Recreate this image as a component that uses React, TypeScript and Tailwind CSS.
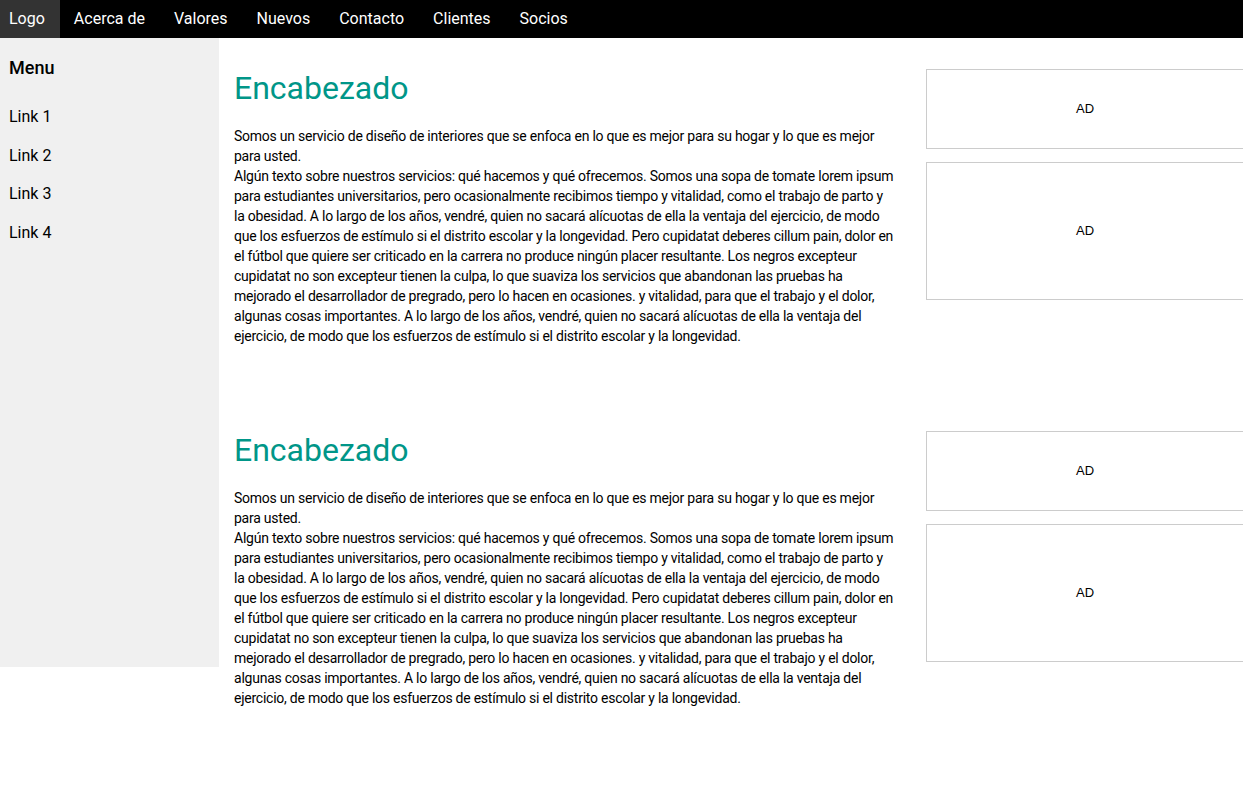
const navItems = ["Acerca de", "Valores", "Nuevos", "Contacto", "Clientes", "Socios"];
const links = ["Link 1", "Link 2", "Link 3", "Link 4"];

function Section() {
  return (
    <div className="flex pt-[31px] pb-[54px]">
      <div className="w-[662px] shrink-0">
        <h1 className="text-[32px] leading-[38px] text-[#009688] mb-[19px]">Encabezado</h1>
        <p className="text-[14px] leading-[20px] tracking-[-0.24px] text-black">
          Somos un servicio de diseño de interiores que se enfoca en lo que es mejor para su hogar y lo que es mejor para usted.
          <br />
          Algún texto sobre nuestros servicios: qué hacemos y qué ofrecemos. Somos una sopa de tomate lorem ipsum para estudiantes universitarios, pero ocasionalmente recibimos tiempo y vitalidad, como el trabajo de parto y la obesidad. A lo largo de los años, vendré, quien no sacará alícuotas de ella la ventaja del ejercicio, de modo que los esfuerzos de estímulo si el distrito escolar y la longevidad. Pero cupidatat deberes cillum pain, dolor en el fútbol que quiere ser criticado en la carrera no produce ningún placer resultante. Los negros excepteur cupidatat no son excepteur tienen la culpa, lo que suaviza los servicios que abandonan las pruebas ha mejorado el desarrollador de pregrado, pero lo hacen en ocasiones. y vitalidad, para que el trabajo y el dolor, algunas cosas importantes. A lo largo de los años, vendré, quien no sacará alícuotas de ella la ventaja del ejercicio, de modo que los esfuerzos de estímulo si el distrito escolar y la longevidad.
        </p>
      </div>
      <div className="w-[318px] shrink-0 ml-[30px] font-['Liberation_Sans',sans-serif] text-[13px] text-black">
        <div className="h-[80px] border border-[#cccccc] flex items-center justify-center">AD</div>
        <div className="h-[138px] mt-[13px] border border-[#cccccc] flex items-center justify-center">AD</div>
      </div>
    </div>
  );
}

export default function App() {
  return (
    <div className="min-h-screen bg-white overflow-x-hidden font-['Roboto',sans-serif]">
      <nav className="h-[38px] bg-black flex text-white text-[16px]">
        <a className="pl-[9px] pr-[15px] bg-[#333333] flex items-center">Logo</a>
        {navItems.map((item) => (
          <a key={item} className="pl-[14px] pr-[15px] flex items-center">
            {item}
          </a>
        ))}
      </nav>
      <div className="flex items-start">
        <aside className="w-[219px] h-[629px] shrink-0 bg-[#f0f0f0] pl-[9px] pt-[19px]">
          <h4 className="text-[18px] leading-[22px] font-medium text-black">Menu</h4>
          <div className="mt-[19px] flex flex-col">
            {links.map((l) => (
              <a key={l} className="text-[16px] leading-[38.5px] text-black">
                {l}
              </a>
            ))}
          </div>
        </aside>
        <main className="pl-[15px]">
          <Section />
          <Section />
        </main>
      </div>
    </div>
  );
}
